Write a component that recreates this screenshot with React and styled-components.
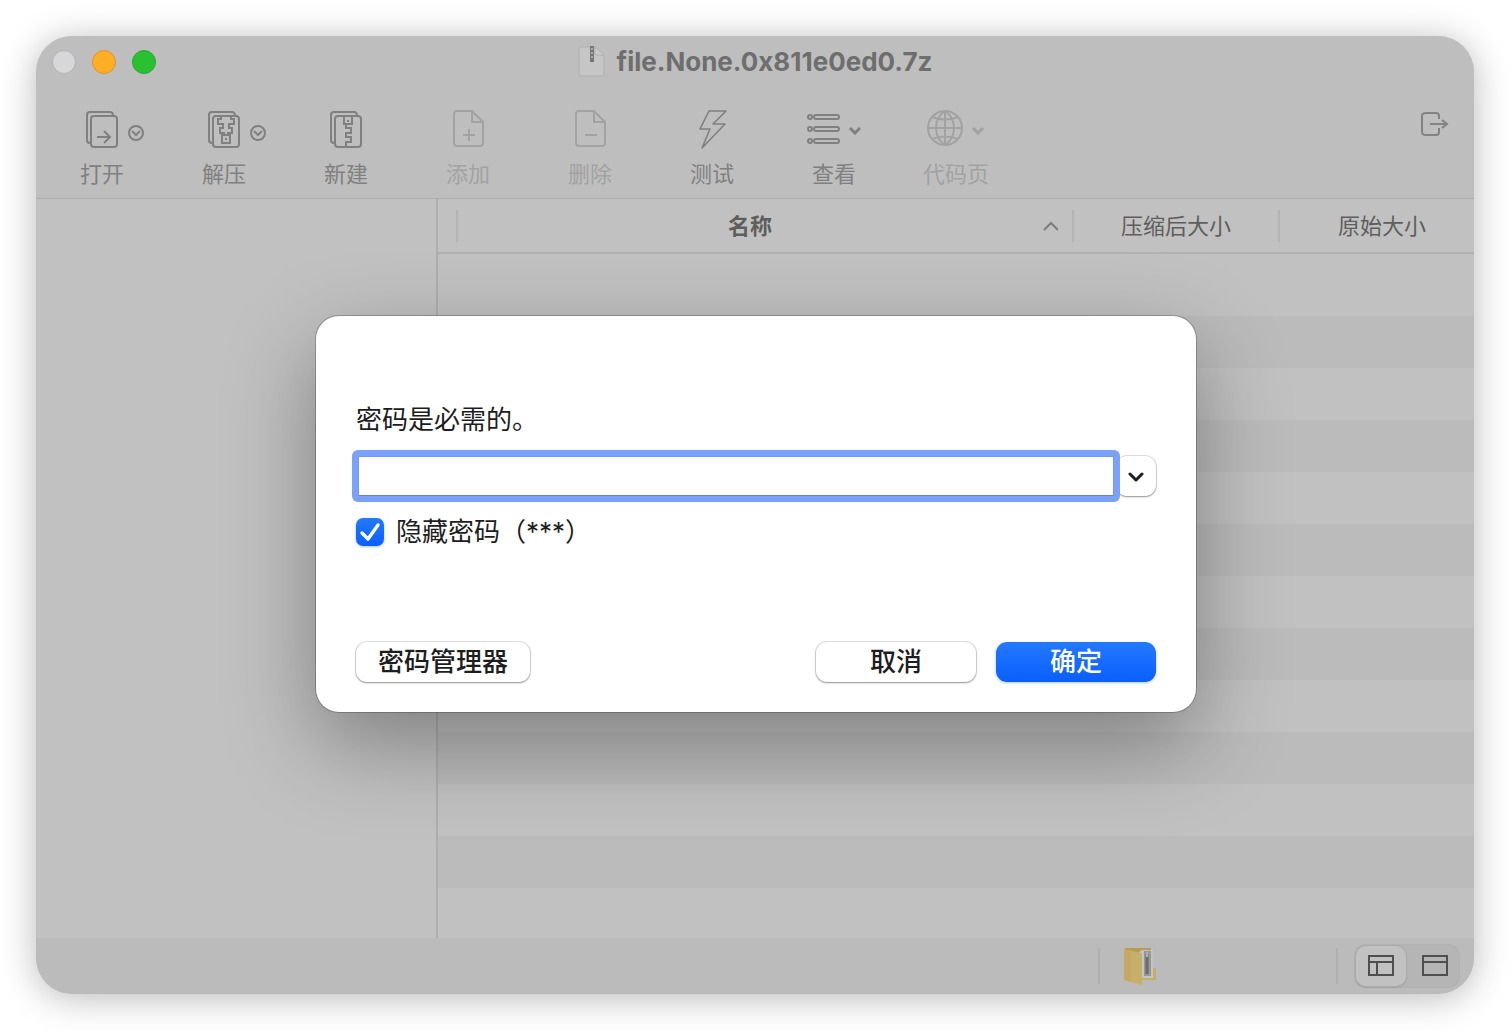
import React, { useState } from "react";
import styled, { createGlobalStyle, css } from "styled-components";

const GlobalStyle = createGlobalStyle`
  * { box-sizing: border-box; }
  body {
    margin: 0;
    background: #fff;
    font-family: Inter, "Noto Sans CJK SC", sans-serif;
  }
  button, input { font: inherit; color: inherit; }
`;

const Page = styled.div`
  display: flex;
  min-height: 100vh;
  padding: 36px;
`;

const Window = styled.main`
  position: relative;
  display: flex;
  flex: 1;
  flex-direction: column;
  min-width: 0;
  overflow: hidden;
  border-radius: 36px;
  background: #c1c1c1;
`;

const WindowShadow = styled.div`
  display: flex;
  flex: 1;
  min-width: 0;
  border-radius: 36px;
  box-shadow: 0 4px 36px rgba(0, 0, 0, 0.28);
`;

const Header = styled.header`
  background: #bebebe;
  border-bottom: 1px solid #adadad;
`;

const TitleBar = styled.div`
  display: grid;
  grid-template-columns: 1fr auto 1fr;
  align-items: center;
  height: 52px;
  padding: 0 16px;
`;

const Lights = styled.div`
  display: flex;
  gap: 16px;
`;

const Light = styled.button`
  width: 24px;
  height: 24px;
  padding: 0;
  border: 1px solid ${(p) => p.$edge};
  border-radius: 50%;
  background: ${(p) => p.$fill};
`;

const Title = styled.h1`
  display: flex;
  align-items: center;
  gap: 12px;
  margin: 0;
  color: #6e6e6e;
  font-size: 26px;
  font-weight: 700;
  line-height: 32px;
`;

const Toolbar = styled.div`
  display: flex;
  align-items: flex-start;
  padding: 22px 24px 10px 5px;
`;

const Tool = styled.button`
  display: flex;
  flex-direction: column;
  gap: 10px;
  width: 122px;
  padding: 0;
  border: 0;
  background: none;
  color: #808080;

  &:disabled { color: #a2a2a2; }
`;

const ToolIcon = styled.span`
  display: grid;
  grid-template-columns: ${(p) => (p.$split ? "1fr auto 1fr" : "auto auto")};
  align-items: center;
  justify-content: center;
  justify-items: start;
  column-gap: 8px;
  width: 100%;
  height: 40px;

  svg { display: block; }
  svg:first-child { grid-column: ${(p) => (p.$split ? 2 : 1)}; }
`;

const ToolLabel = styled.span`
  width: 100%;
  font-size: 22px;
  line-height: 28px;
  text-align: center;
`;

const ExitButton = styled.button`
  margin-left: auto;
  padding: 0;
  border: 0;
  background: none;
  color: #828282;

  svg { display: block; }
`;

const Body = styled.div`
  display: flex;
  flex: 1;
  min-height: 0;
`;

const Sidebar = styled.aside`
  width: 402px;
  border-right: 2px solid #aeaeae;
`;

const Listing = styled.section`
  display: flex;
  flex: 1;
  flex-direction: column;
  min-width: 0;
  overflow: hidden;
`;

const Table = styled.table`
  width: calc(100% + 12px);
  border-spacing: 0;
  table-layout: fixed;
`;

const HeadCell = styled.th`
  width: ${(p) => p.$width};
  height: 55px;
  padding: 0;
  border-bottom: 2px solid #b1b1b1;
  color: #5e5e5e;
  font-size: 22px;
  font-weight: ${(p) => (p.$sorted ? 700 : 400)};
  line-height: 32px;
`;

const HeadLabel = styled.div`
  display: flex;
  align-items: center;
  height: 32px;
  padding-right: ${(p) => (p.$sorted ? 14 : 0)}px;
  border-right: 2px solid #b3b3b3;

  span { flex: 1; }
  svg { flex: none; color: #7c7c7c; }
`;

const Stripes = styled.div`
  flex: 1;
  margin-top: 10px;
  background: repeating-linear-gradient(#c1c1c1 0 52px, #bbbbbb 52px 104px);
`;

const Footer = styled.footer`
  display: flex;
  align-items: center;
  justify-content: flex-end;
  height: 56px;
  padding-right: 14px;
  background: #bbbbbb;
`;

const ArchiveStatus = styled.div`
  display: flex;
  align-items: center;
  width: 240px;
  height: 36px;
  margin-right: 16px;
  padding-left: 20px;
  border: solid #afafaf;
  border-width: 0 2px;
`;

const Segments = styled.div`
  display: flex;
  gap: 4px;
  padding: 2px 0 2px 2px;
  border-radius: 12px;
  background: #b5b5b5;
  box-shadow: inset 0 0 0 1px #b0b2b2;
`;

const Segment = styled.button`
  display: grid;
  place-items: center;
  width: 50px;
  height: 40px;
  padding: 0;
  border: 0;
  border-radius: 10px;
  background: none;
  color: #4f4f4f;
  ${(p) => p.$active && css`
    background: #c1c1c1;
    box-shadow: 0 0 0 1px #acacac, 0 1px 2px rgba(0, 0, 0, 0.3);
  `}
`;

const SheetLayer = styled.div`
  position: absolute;
  inset: 0;
  padding: 280px 278px 0 280px;
`;

const Sheet = styled.form`
  padding: 84px 40px 30px;
  border-radius: 23px;
  background: #fff;
  box-shadow: 0 0 0 1px rgba(0, 0, 0, 0.22), 0 32px 88px rgba(0, 0, 0, 0.34);
  color: #1d1d1d;
  font-size: 26px;
  line-height: 40px;
`;

const Prompt = styled.label`
  display: block;
`;

const FieldRow = styled.div`
  display: flex;
  align-items: center;
  margin: 10px 0 10px -4px;
`;

const FocusRing = styled.div`
  z-index: 1;
  display: flex;
  flex: 1;
  min-width: 0;
  padding: 6px;
  border-radius: 6px;
  background: #7aa2fb;
`;

const PasswordInput = styled.input`
  flex: 1;
  min-width: 0;
  height: 40px;
  padding: 0 8px;
  border: 1px solid #7398ee;
  border-bottom-color: #6484cf;
  border-radius: 0;
  background: #fff;
  outline: 0;
`;

const Button = styled.button`
  height: 40px;
  width: ${(p) => p.$width}px;
  padding: 0;
  border: 0;
  border-radius: 11px;
  background: #fff;
  box-shadow: 0 0 0 1px rgba(0, 0, 0, 0.12), 0 1px 2px rgba(0, 0, 0, 0.35);
  color: #1d1d1d;
  font-weight: 500;
  line-height: 40px;
  ${(p) => p.$primary && css`
    background: linear-gradient(#2379ff, #0a5fff);
    box-shadow: 0 1px 3px rgba(10, 95, 255, 0.35);
    color: #fff;
  `}
`;

const HistoryButton = styled(Button)`
  display: grid;
  place-items: center;
  margin-left: -4px;
`;

const CheckRow = styled.label`
  display: flex;
  align-items: center;
  gap: 12px;
`;

const Checkbox = styled.input`
  width: 28px;
  height: 28px;
  margin: 0;
  appearance: none;
  border-radius: 7px;
  background: #fff;
  box-shadow: 0 0 0 1px #c4c4c4;

  &:checked {
    background: url("data:image/svg+xml,%3Csvg xmlns='http://www.w3.org/2000/svg' viewBox='0 0 28 28'%3E%3Cpath d='M6 15 12 21 22 7' fill='none' stroke='white' stroke-width='3.4' stroke-linecap='round' stroke-linejoin='round'/%3E%3C/svg%3E"),
      linear-gradient(#2379ff, #0a5fff);
    box-shadow: 0 1px 3px rgba(10, 95, 255, 0.35);
  }
`;

const Actions = styled.div`
  display: flex;
  gap: 20px;
  margin-top: 90px;
`;

const Spacer = styled.div`
  flex: 1;
`;

function Icon({ width, height, stroke = 2, children }) {
  return (
    <svg width={width} height={height} viewBox={`0 0 ${width} ${height}`} fill="none"
      stroke="currentColor" strokeWidth={stroke} aria-hidden="true">
      {children}
    </svg>
  );
}

function StackIcon({ children }) {
  return (
    <Icon width={34} height={40}>
      <path d="M6 33H5Q2 33 2 30V5Q2 2 5 2H25Q28 2 28 6" />
      <rect x="6" y="6" width="26" height="31" rx="3" />
      {children}
    </Icon>
  );
}

const OpenIcon = () => (
  <StackIcon><path d="M12 27H25M19 21 25 27 19 33" /></StackIcon>
);

const ExtractIcon = () => (
  <StackIcon>
    <path d="M14 6V9H11V14H16V18H13V23H17V25M24 6V9H27V14H22V18H25V23H21V25" />
    <path d="M15 25H23V33H15ZM18 29H20" />
  </StackIcon>
);

const NewIcon = () => (
  <StackIcon>
    <path d="M15 6V14H23V6M18 11H20M17 14V18H22V23H17V27H22V32H17V37" />
  </StackIcon>
);

function PageIcon({ children }) {
  return (
    <Icon width={32} height={40}>
      <path d="M5 1H20L31 12V33Q31 36 28 36H5Q2 36 2 33V4Q2 1 5 1ZM20 1V12H31" />
      {children}
    </Icon>
  );
}

const AddIcon = () => <PageIcon><path d="M11 25H23M17 19V31" /></PageIcon>;
const DeleteIcon = () => <PageIcon><path d="M11 25H23" /></PageIcon>;

const TestIcon = () => (
  <Icon width={30} height={40} stroke={1.6}>
    <path d="M12 1H29L16 14H28L5 38 13 19H3Z" strokeLinejoin="round" />
  </Icon>
);

const ListIcon = () => (
  <Icon width={34} height={40}>
    {[7, 19, 31].map((y) => (
      <g key={y}>
        <circle cx="4" cy={y} r="2" />
        <rect x="8" y={y - 2} width="25" height="4" rx="2" />
      </g>
    ))}
  </Icon>
);

const GlobeIcon = () => (
  <Icon width={36} height={40}>
    <circle cx="18" cy="18" r="17" />
    <path d="M18 1V35M1 18H35M18 1C6 9 6 27 18 35M18 1C30 9 30 27 18 35M5 7Q18 12 31 7M5 29Q18 24 31 29" />
  </Icon>
);

const CircleArrow = () => (
  <Icon width={18} height={34}>
    <circle cx="9" cy="20" r="7" />
    <path d="M5 18 9 22 13 18" />
  </Icon>
);

const Chevron = () => (
  <Icon width={14} height={10} stroke={3}>
    <path d="M2 3 7 8 12 3" />
  </Icon>
);

const tools = [
  { label: "打开", icon: OpenIcon, arrow: CircleArrow, split: true },
  { label: "解压", icon: ExtractIcon, arrow: CircleArrow, split: true },
  { label: "新建", icon: NewIcon, split: true },
  { label: "添加", icon: AddIcon, split: true, disabled: true },
  { label: "删除", icon: DeleteIcon, split: true, disabled: true },
  { label: "测试", icon: TestIcon, split: true },
  { label: "查看", icon: ListIcon, arrow: Chevron },
  { label: "代码页", icon: GlobeIcon, arrow: Chevron, disabled: true },
];

const ArchiveFileIcon = () => (
  <svg width="27" height="32" viewBox="0 0 27 32" aria-hidden="true">
    <path d="M3 1H17L26 10V28Q26 30 24 30H3Q1 30 1 28V3Q1 1 3 1Z" fill="#c6c6c6" stroke="#b1b1b1" />
    <path d="M17 1V7Q17 9 19 9H26Z" fill="#cecece" stroke="#aeaeae" />
    <path d="M12 0H16V16H12Z" fill="#777" />
    <path d="M14 2V12" stroke="#aaa" strokeWidth="2" strokeDasharray="2 2" />
  </svg>
);

const FolderIcon = () => (
  <svg width="40" height="40" viewBox="0 0 40 40" aria-hidden="true">
    <path d="M5 3Q5 2 6 2H31V33H5Z" fill="#b99b50" />
    <path d="M19 6 22 4H33V33H19Z" fill="#c4c4c6" />
    <path d="M24 5H31V30H24Z" fill="#979797" />
    <path d="M27 8V28" stroke="#6c6c6c" strokeWidth="3" />
    <path d="M27 6V11" stroke="#b0b0b0" strokeWidth="2" />
    <path d="M33 23Q33 22 34 22H36V34H21V32H33Z" fill="#c6ae63" />
    <path d="M4 3 21 7Q22 7 22 8V39Q22 40 21 39L4 34Z" fill="#c6b067" />
    <path d="M4 3 11 5V36L4 34Z" fill="#c5a865" />
  </svg>
);

export default function App() {
  const [hidden, setHidden] = useState(true);
  return (
    <Page>
      <GlobalStyle />
      <WindowShadow>
        <Window>
          <Header>
            <TitleBar>
              <Lights>
                <Light type="button" aria-label="关闭" $fill="#d7d7d9" $edge="#b2b2b2" />
                <Light type="button" aria-label="最小化" $fill="#ffae26" $edge="#e0922a" />
                <Light type="button" aria-label="缩放" $fill="#2ac131" $edge="#27a92c" />
              </Lights>
              <Title><ArchiveFileIcon />file.None.0x811e0ed0.7z</Title>
            </TitleBar>
            <Toolbar>
              {tools.map(({ label, icon: Glyph, arrow: Arrow, split, disabled }) => (
                <Tool key={label} type="button" disabled={disabled}>
                  <ToolIcon $split={split}><Glyph />{Arrow && <Arrow />}</ToolIcon>
                  <ToolLabel>{label}</ToolLabel>
                </Tool>
              ))}
              <ExitButton type="button" aria-label="退出">
                <Icon width={30} height={28}>
                  <path d="M19 9V6Q19 3 16 3H6Q2 3 2 6V22Q2 25 6 25H16Q19 25 19 22V18M10 14H27M22 10 27 14 22 18" />
                </Icon>
              </ExitButton>
            </Toolbar>
          </Header>
          <Body>
            <Sidebar />
            <Listing>
              <Table>
                <thead>
                  <tr>
                    <HeadCell $width="20px"><HeadLabel /></HeadCell>
                    <HeadCell $width="auto" $sorted aria-sort="ascending">
                      <HeadLabel $sorted>
                        <span>名称</span>
                        <Icon width={16} height={10}><path d="M2 9 9 2 16 9" /></Icon>
                      </HeadLabel>
                    </HeadCell>
                    <HeadCell $width="206px"><HeadLabel><span>压缩后大小</span></HeadLabel></HeadCell>
                    <HeadCell $width="206px"><HeadLabel><span>原始大小</span></HeadLabel></HeadCell>
                  </tr>
                </thead>
              </Table>
              <Stripes />
            </Listing>
          </Body>
          <Footer>
            <ArchiveStatus><FolderIcon /></ArchiveStatus>
            <Segments>
              <Segment type="button" aria-label="分栏视图" $active>
                <Icon width={26} height={22}><path d="M1 1H25V20H1ZM1 7H25M9 7V20" /></Icon>
              </Segment>
              <Segment type="button" aria-label="列表视图">
                <Icon width={26} height={22}><path d="M1 1H25V20H1ZM1 7H25" /></Icon>
              </Segment>
            </Segments>
          </Footer>
          <SheetLayer>
            <Sheet role="dialog" aria-label="密码" onSubmit={(e) => e.preventDefault()}>
              <Prompt htmlFor="password">密码是必需的。</Prompt>
              <FieldRow>
                <FocusRing>
                  <PasswordInput id="password" type={hidden ? "password" : "text"} autoComplete="off" />
                </FocusRing>
                <HistoryButton type="button" aria-label="最近的密码" $width={40}>
                  <Icon width={16} height={12} stroke={3}>
                    <path d="M2 4 8 10 14 4" strokeLinecap="round" strokeLinejoin="round" />
                  </Icon>
                </HistoryButton>
              </FieldRow>
              <CheckRow>
                <Checkbox type="checkbox" checked={hidden} onChange={(e) => setHidden(e.target.checked)} />
                <span>隐藏密码（***）</span>
              </CheckRow>
              <Actions>
                <Button type="button" $width={174}>密码管理器</Button>
                <Spacer />
                <Button type="button" $width={160}>取消</Button>
                <Button type="submit" $width={160} $primary>确定</Button>
              </Actions>
            </Sheet>
          </SheetLayer>
        </Window>
      </WindowShadow>
    </Page>
  );
}
